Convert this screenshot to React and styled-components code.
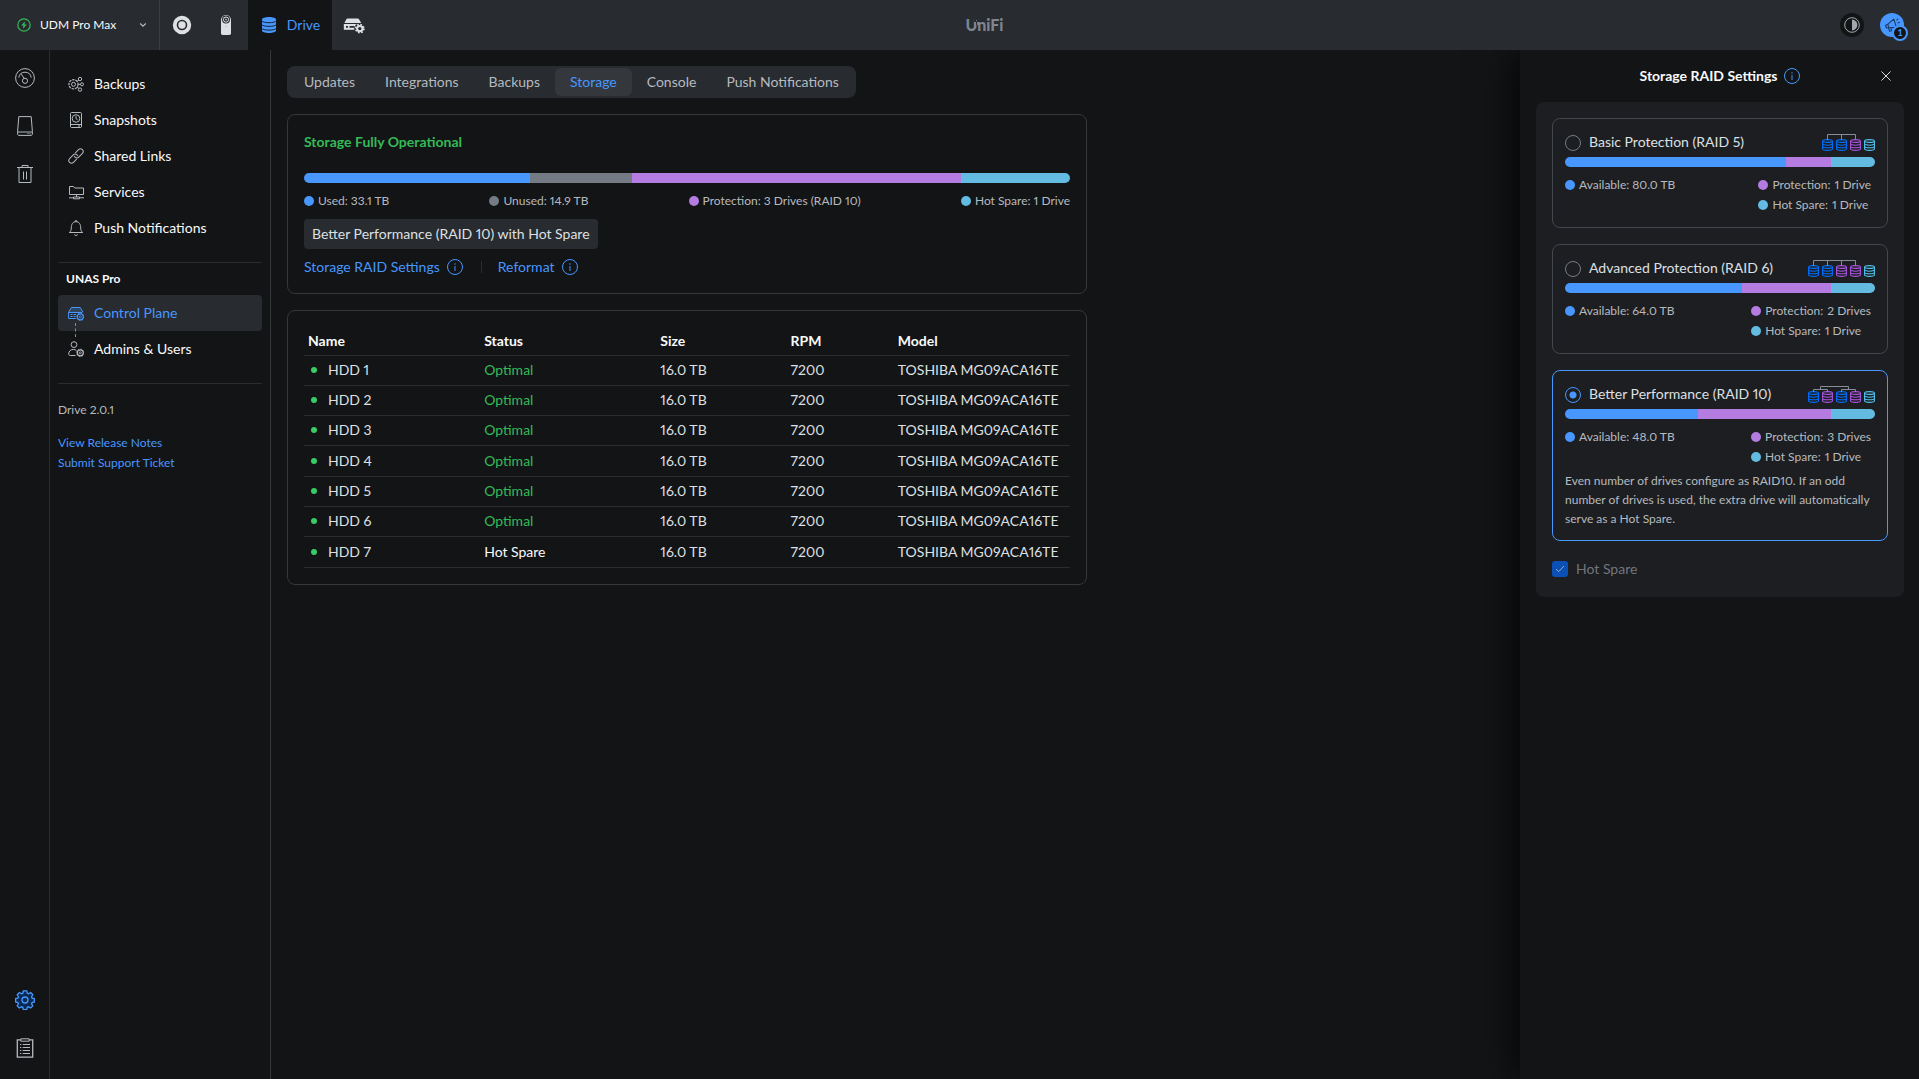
import React, { useState } from "react"
import styled, { createGlobalStyle, css } from "styled-components"

const colors = {
    page: "#131416",
    bar: "#282b2f",
    tabActive: "#34383d",
    panel: "#1d1e21",
    line: "#2a2c30",
    border: "#34373b",
    borderStrong: "#42474d",
    text: "#f9fafa",
    textSoft: "#dee0e3",
    textMuted: "#b6babf",
    textDim: "#70757d",
    blue: "#4797ff",
    green: "#34ba57",
    purple: "#b47be0",
    cyan: "#63bbe1",
    gray: "#747b84"
}

const rails = [
    { name: "Dashboard", icon: "gauge" },
    { name: "Drives", icon: "disk" },
    { name: "Trash", icon: "trash" }
]

const navItems = [
    { name: "Backups", icon: "backups" },
    { name: "Snapshots", icon: "snapshot" },
    { name: "Shared Links", icon: "link" },
    { name: "Services", icon: "services" },
    { name: "Push Notifications", icon: "bell" }
]

const tabs = ["Updates", "Integrations", "Backups", "Storage", "Console", "Push Notifications"]

const usage = [
    { label: "Used: 33.1 TB", size: 226, color: colors.blue },
    { label: "Unused: 14.9 TB", size: 102, color: colors.gray },
    { label: "Protection: 3 Drives (RAID 10)", size: 329, color: colors.purple },
    { label: "Hot Spare: 1 Drive", size: 109, color: colors.cyan }
]

const drives = [1, 2, 3, 4, 5, 6, 7].map((n) => ({
    name: `HDD ${n}`,
    status: n === 7 ? "Hot Spare" : "Optimal",
    size: "16.0 TB",
    rpm: "7200",
    model: "TOSHIBA MG09ACA16TE"
}))

const raids = [
    {
        id: "raid5",
        title: "Basic Protection (RAID 5)",
        sizes: [221, 45, 44],
        available: "80.0 TB",
        protection: "1 Drive",
        disks: "bbpc"
    },
    {
        id: "raid6",
        title: "Advanced Protection (RAID 6)",
        sizes: [177, 89, 44],
        available: "64.0 TB",
        protection: "2 Drives",
        disks: "bbppc"
    },
    {
        id: "raid10",
        title: "Better Performance (RAID 10)",
        sizes: [133, 133, 44],
        available: "48.0 TB",
        protection: "3 Drives",
        disks: "bpbpc",
        note: "Even number of drives configure as RAID10. If an odd number of drives is used, the extra drive will automatically serve as a Hot Spare."
    }
]

const App = () => {
    const [tab, setTab] = useState("Storage")
    const [raid, setRaid] = useState("raid10")

    return (
        <Page>
            <GlobalStyle />
            <TopBar />
            <Body>
                <Rail>
                    {rails.map(({ name, icon }) => (
                        <RailLink key={name} href="#" aria-label={name}><Icon name={icon} size={20} /></RailLink>
                    ))}
                    <Spacer />
                    <RailLink href="#" aria-label="Settings" $active><Icon name="gear" size={20} /></RailLink>
                    <RailLink href="#" aria-label="Logs"><Icon name="clipboard" size={20} /></RailLink>
                </Rail>
                <Sidebar />
                <Main>
                    <Tabs>
                        {tabs.map((name) => (
                            <Tab key={name} type="button" $active={name === tab} onClick={() => setTab(name)}>{name}</Tab>
                        ))}
                    </Tabs>
                    <Summary />
                    <DriveTable />
                </Main>
                <Panel>
                    <PanelHeader>
                        <PanelTitle>Storage RAID Settings</PanelTitle>
                        <InfoButton />
                        <CloseButton type="button" aria-label="Close">
                            <svg width="10" height="10" viewBox="0 0 10 10" fill="none" stroke="currentColor" strokeWidth="1"><path d="M.5.5l9 9M9.5.5l-9 9" /></svg>
                        </CloseButton>
                    </PanelHeader>
                    <PanelBody>
                        {raids.map((item) => (
                            <RaidOption key={item.id} {...item} checked={item.id === raid} onSelect={() => setRaid(item.id)} />
                        ))}
                        <CheckLabel>
                            <Checkbox type="checkbox" checked disabled readOnly />
                            <CheckMark width="10" height="8" viewBox="0 0 10 8"><path d="M1 4l2.7 2.7L9 1" /></CheckMark>
                            Hot Spare
                        </CheckLabel>
                    </PanelBody>
                </Panel>
            </Body>
        </Page>
    )
}

const TopBar = () => (
    <Header>
        <ConsoleLabel>
            <Icon name="power" size={14} />
            <ConsoleSelect aria-label="Console">
                <option>UDM Pro Max</option>
            </ConsoleSelect>
            <svg width="8" height="6" viewBox="0 0 8 6" fill="none" stroke="#b6babf" strokeWidth="1.2"><path d="M1.2 1.5L4 4.2l2.8-2.7" /></svg>
        </ConsoleLabel>
        <AppLink href="#" aria-label="Network"><Icon name="network" size={20} /></AppLink>
        <AppLink href="#" aria-label="Protect"><Icon name="doorbell" size={22} /></AppLink>
        <AppLink href="#" $active><Icon name="stack" size={18} />Drive</AppLink>
        <AppLink href="#" aria-label="Control Plane"><Icon name="serverCog" size={22} /></AppLink>
        <Brand>
            UniFi
            <BrandPixels width="5" height="6" viewBox="0 0 5 6">
                <rect width="5" height="6" fill={colors.bar} />
                <path d="M0 3h2v3H0zM2 1h1v1H2zM3 3h2v3H3z" fill="currentColor" />
            </BrandPixels>
        </Brand>
        <Tools>
            <ThemeButton type="button" aria-label="Theme">
                <svg width="16" height="16" viewBox="0 0 16 16"><circle cx="8" cy="8" r="7.3" fill="none" stroke="currentColor" /><path d="M8 2.6a5.4 5.4 0 0 1 0 10.8z" fill="currentColor" /></svg>
            </ThemeButton>
            <Avatar type="button" aria-label="Account">
                <Icon name="megaphone" size={18} />
                <Badge>1</Badge>
            </Avatar>
        </Tools>
    </Header>
)

const Sidebar = () => (
    <SidebarBox>
        <nav>
            {navItems.map(({ name, icon }) => (
                <NavLink key={name} href="#"><Icon name={icon} size={16} />{name}</NavLink>
            ))}
        </nav>
        <NavGroup>
            <h2>UNAS Pro</h2>
            <NavLink href="#" $active>
                <Icon name="controlPlane" size={16} />
                Control Plane
                <Connector width="1" height="14" viewBox="0 0 1 14"><path d="M.5 0v14" stroke={colors.blue} strokeDasharray="3 2.5" /></Connector>
            </NavLink>
            <NavLink href="#"><Icon name="admins" size={16} />Admins &amp; Users</NavLink>
        </NavGroup>
        <Version>
            <p>Drive 2.0.1</p>
            <a href="#">View Release Notes</a>
            <a href="#">Submit Support Ticket</a>
        </Version>
    </SidebarBox>
)

const Summary = () => (
    <Card>
        <SummaryTitle>Storage Fully Operational</SummaryTitle>
        <UsageBar items={usage} />
        <LegendRow>
            {usage.map(({ label, color }) => <LegendItem key={label} $color={color}>{label}</LegendItem>)}
        </LegendRow>
        <Chip>Better Performance (RAID 10) with Hot Spare</Chip>
        <Links>
            <span><a href="#">Storage RAID Settings</a><InfoButton /></span>
            <span><a href="#">Reformat</a><InfoButton /></span>
        </Links>
    </Card>
)

const DriveTable = () => (
    <Card>
        <Table>
            <thead>
                <tr>
                    <th>Name</th>
                    <th>Status</th>
                    <th>Size</th>
                    <th>RPM</th>
                    <th>Model</th>
                </tr>
            </thead>
            <tbody>
                {drives.map((drive) => (
                    <tr key={drive.name}>
                        <td><Dot />{drive.name}</td>
                        <StatusCell $ok={drive.status === "Optimal"}>{drive.status}</StatusCell>
                        <td>{drive.size}</td>
                        <td>{drive.rpm}</td>
                        <td>{drive.model}</td>
                    </tr>
                ))}
            </tbody>
        </Table>
    </Card>
)

const RaidOption = ({ id, title, sizes, available, protection, disks, note, checked, onSelect }) => (
    <RaidCard $active={checked}>
        <RaidHead>
            <Radio type="radio" name="raid" id={id} checked={checked} onChange={onSelect} />
            <label htmlFor={id}>{title}</label>
            <DiskTree disks={disks} />
        </RaidHead>
        <UsageBar items={[colors.blue, colors.purple, colors.cyan].map((color, i) => ({ color, size: sizes[i] }))} />
        <RaidLegend>
            <LegendItem $color={colors.blue}>Available: {available}</LegendItem>
            <div>
                <LegendItem $color={colors.purple}>Protection: <span>{protection}</span></LegendItem>
                <LegendItem $color={colors.cyan}>Hot Spare: <span>1 Drive</span></LegendItem>
            </div>
        </RaidLegend>
        {note && <Note>{note}</Note>}
    </RaidCard>
)

const UsageBar = ({ items }) => (
    <Bar>
        {items.map(({ color, size }) => <Segment key={color} $color={color} style={{ flexGrow: size }} />)}
    </Bar>
)

const diskColors = { b: "#006fff", p: "#a855e0", c: "#4fc3f0" }

const DiskTree = ({ disks }) => {
    const width = disks.length * 14 - 3
    const last = width - 19.5
    const wires = disks === "bpbpc"
        ? "M5.5 6V3.5h14V6M33.5 6V3.5h14V6M12.5 3.5v-3h28v3"
        : `M5.5 6V.5H${last}V6` + [19.5, 33.5].filter((x) => x < last).map((x) => `M${x} .5V6`).join("")
    return (
        <svg width={width} height="18" viewBox={`0 0 ${width} 18`} fill="none">
            {disks.split("").map((disk, i) => (
                <g key={i} transform={`translate(${i * 14} 5)`} stroke={diskColors[disk]} strokeWidth="1.1">
                    <ellipse cx="5.5" cy="2" rx="4.9" ry="1.5" fill={diskColors[disk]} fillOpacity=".25" />
                    <path d="M.6 2v7.8c0 .9 2.2 1.6 4.9 1.6s4.9-.7 4.9-1.6V2M.6 4.6c0 .9 2.2 1.6 4.9 1.6s4.9-.7 4.9-1.6M.6 7.2c0 .9 2.2 1.6 4.9 1.6s4.9-.7 4.9-1.6" />
                </g>
            ))}
            <path d={wires} stroke="#868d96" />
        </svg>
    )
}

const InfoButton = () => (
    <IconButton type="button" aria-label="More info">
        <svg width="16" height="16" viewBox="0 0 16 16" fill="none" stroke="currentColor">
            <circle cx="8" cy="8" r="7.5" />
            <path d="M8 7v5M8 4.3v1.4" strokeWidth="1.3" opacity=".75" />
        </svg>
    </IconButton>
)

const smallGear = (
    <>
        <circle cx="12.3" cy="11.8" r="3" strokeWidth="1.2" />
        <circle cx="12.3" cy="11.8" r="1" strokeWidth=".8" />
        <circle cx="12.3" cy="11.8" r="3.7" strokeWidth=".8" strokeDasharray="1.4 1.5" />
    </>
)

// [viewBox size, drawing]
const icons = {
    power: [14, (
        <g fill="none" stroke={colors.green}>
            <circle cx="7" cy="7" r="6.2" strokeWidth="1.2" />
            <path d="M7.9 3.2L4.2 7.6h2.2l-.4 3.2 3.8-4.4H7.5z" fill={colors.green} stroke="none" />
        </g>
    )],
    network: [20, (
        <g fill="#dee0e3">
            <path fillRule="evenodd" d="M10 .8a9.2 9.2 0 1 0 0 18.4A9.2 9.2 0 0 0 10 .8zm0 3.9a5.3 5.3 0 1 1 0 10.6 5.3 5.3 0 0 1 0-10.6z" />
            <circle cx="10" cy="10" r="3.7" />
        </g>
    )],
    doorbell: [22, (
        <g>
            <path d="M6 6a5 5 0 0 1 10 0v13.300c0 .9-.7 1.700-1.700 1.700H7.700c-1 0-1.700-.8-1.700-1.700z" fill="#dee0e3" />
            <circle cx="11" cy="5.6" r="4" fill={colors.bar} />
            <circle cx="11" cy="5.6" r="2.6" fill="none" stroke="#dee0e3" />
            <circle cx="11" cy="5.6" r=".8" fill="#dee0e3" />
            <circle cx="11" cy="12.5" r=".6" fill="#9da2a9" />
        </g>
    )],
    stack: [18, (
        <g>
            <path d="M2 3.500C2 2 5.100 1 9 1s7 1 7 2.500v11C16 16 12.900 17 9 17s-7-1-7-2.500z" fill="currentColor" />
            <path d="M1.500 4.800c1 1.300 4 1.900 7.500 1.900s6.500-.6 7.500-1.900M1.500 8.500c1 1.300 4 1.900 7.500 1.900s6.500-.6 7.500-1.900M1.500 12.200c1 1.300 4 1.900 7.500 1.900s6.500-.6 7.500-1.900" fill="none" stroke={colors.page} strokeWidth=".9" />
        </g>
    )],
    serverCog: [22, (
        <g>
            <path d="M4.600 4.500h9.800c.8 0 1.400.3 1.800 1l2 3.500H1.400l1.800-3.600c.3-.6.800-.9 1.400-.9z" fill="#dee0e3" />
            <path d="M.8 10h18.500v5.800H.8z" fill="#dee0e3" />
            <path d="M3 12h2v1.800H3zM6.500 12h5v1.800h-5z" fill={colors.bar} />
            <circle cx="16.800" cy="14.600" r="5.600" fill={colors.bar} />
            <circle cx="16.800" cy="14.600" r="2.700" fill="none" stroke="#dee0e3" strokeWidth="2" />
            <circle cx="16.800" cy="14.600" r="4.100" fill="none" stroke="#dee0e3" strokeWidth="1.600" strokeDasharray="1.700 1.520" />
        </g>
    )],
    megaphone: [18, (
        <g fill="none" stroke="#1b3a66" strokeWidth="1.100" strokeLinejoin="round">
            <path d="M2.500 9.500l2.300-1.300 6-5 2.700 8.200-8 .300-2 .300z" />
            <path d="M5.500 12l1.200 3.300 2-.6-.8-2.900M4.800 8.200l1 3.400" />
            <path d="M13.500 4.500l1.700-2M14.500 7l2.300-.7M14.800 9.300l2 .4" />
        </g>
    )],
    gauge: [20, (
        <g>
            <circle cx="10" cy="10" r="9.400" />
            <path d="M3.800 9.600A6.400 6.400 0 0 1 10 4.200a6.400 6.400 0 0 1 6.200 5.400" />
            <circle cx="10" cy="12.800" r="2.600" />
            <path d="M9.200 10.300L6.400 6.300" />
        </g>
    )],
    disk: [20, (
        <g>
            <path d="M3.800.6h12.400l1.200 14.900v2.400c0 .9-.6 1.500-1.400 1.500H4c-.8 0-1.400-.6-1.400-1.500v-2.400zM2.600 16h14.800" />
            <path d="M12.500 17.700h1M14.500 17.700h1" />
        </g>
    )],
    trash: [20, <path d="M2 3.500h16M7 3.500v-2h6v2M4 3.500v15h12v-15M8.500 7.500v8M11.500 7.500v8" />],
    gear: [20, (
        <g strokeWidth="1.300">
            <path fill="#0a2a56" d="M8.300.8h3.400l.6 2.400 1.200.5 2.200-1.200 2.100 2.200-1.200 2.100.5 1.300 2.300.5v3.300l-2.300.6-.5 1.200 1.200 2.200-2.200 2.100-2.100-1.200-1.200.5-.6 2.300H8.300l-.5-2.300-1.300-.5-2.100 1.200-2.200-2.100 1.200-2.200-.5-1.200-2.300-.6V8.600l2.300-.5.5-1.300-1.200-2.100 2.200-2.200 2.100 1.200 1.300-.5z" />
            <circle cx="10" cy="10" r="3" />
        </g>
    )],
    clipboard: [20, (
        <g>
            <path d="M6 1.800H2.300v17.400h15.400V1.800H14" strokeWidth="1.300" />
            <path d="M5.800.8h8.400v2.400H5.800z" />
            <path d="M5 6.500h1.300M7.700 6.500H15M5 9.500h1.300M7.700 9.500H15M5 12.500h1.300M7.700 12.500H15M5 15.500h1.300M7.700 15.500H15" />
        </g>
    )],
    backups: [16, (
        <g>
            <circle cx="5.500" cy="8.300" r="4.600" strokeWidth="1.200" strokeDasharray="2.400 .9" />
            <circle cx="5.500" cy="8.300" r="2" />
            <circle cx="12" cy="3" r="1.700" />
            <circle cx="14" cy="8.300" r="1.500" />
            <circle cx="12" cy="13.600" r="1.700" />
            <path d="M9 5.500l1.900-1.400M10.200 8.300h2.300M9 11l1.900 1.500" />
        </g>
    )],
    snapshot: [16, (
        <g>
            <rect x="2.500" y=".5" width="11" height="15" rx="1" />
            <path d="M2.500 12.500h11M10 14h2" />
            <circle cx="8" cy="6.500" r="3.800" />
            <path d="M8 4.200v2.500l1.500 1" />
        </g>
    )],
    link: [16, (
        <g transform="rotate(-45 8 8)">
            <path d="M6.500 10.700H1.700a2.700 2.700 0 0 1 0-5.400h5.100a2.700 2.700 0 0 1 2.400 4" />
            <path d="M9.500 5.300h4.800a2.700 2.700 0 0 1 0 5.400H9.200a2.700 2.700 0 0 1-2.400-4" />
        </g>
    )],
    services: [16, (
        <g>
            <path d="M1.500 10.500v-8h4l1.300 1.500h8.700v6.500zM8.500 10.500v2.500" />
            <path d="M1 13.800h4.500M11.500 13.800H16M5.500 13h6v1.800h-6z" />
        </g>
    )],
    bell: [16, (
        <g>
            <path d="M1.300 12.500c1.500-1 2-2.300 2-4.500C3.300 4 5 1.700 8 1.700S12.700 4 12.700 8c0 2.200.5 3.500 2 4.500zM7 1.500c0-.6.4-1 1-1s1 .4 1 1M6.300 14.700c.8.900 2.600.9 3.400 0" />
        </g>
    )],
    controlPlane: [16, (
        <g>
            <path d="M.6 13.500V7.300L3.300 2.500h8.900l2.900 4.800M.6 13.500h7.200" />
            <path d="M.8 7.500h13.500l-2.300-4.600H3.300z" fill="currentColor" opacity=".25" />
            <path d="M.6 7.500h13.500M2.500 9.500h2M2.500 11.500h2M5.500 9.500h2.500M5.500 11.500h2" />
            {smallGear}
        </g>
    )],
    admins: [16, (
        <g>
            <circle cx="6" cy="3.600" r="2.900" />
            <path d="M7.500 14.500H2.300C1.200 14.500.7 13.800.7 13c0-2.700 2-4.600 4.600-4.600 1.200 0 2.300.4 3.100 1.100" />
            {smallGear}
        </g>
    )]
}

const outlined = ["gauge", "disk", "trash", "gear", "clipboard", "backups", "snapshot", "link", "services", "bell", "controlPlane", "admins"]

const Icon = ({ name, size }) => {
    const [box, drawing] = icons[name]
    return (
        <svg width={size} height={size} viewBox={`0 0 ${box} ${box}`} fill="none" stroke={outlined.includes(name) ? "currentColor" : "none"} aria-hidden="true">
            {drawing}
        </svg>
    )
}

const GlobalStyle = createGlobalStyle`
    * {
        box-sizing: border-box;
    }
    body {
        margin: 0;
        background: ${colors.page};
        color: ${colors.textSoft};
        font: normal 14px/20px Lato, "Open Sans", sans-serif;
        font-variant-numeric: proportional-nums;
    }
    h1, h2, p {
        margin: 0;
    }
    a {
        color: ${colors.blue};
        text-decoration: none;
    }
    button, select {
        font: inherit;
        color: inherit;
        background: none;
        border: none;
        padding: 0;
        cursor: pointer;
    }
    svg {
        display: block;
        flex: none;
    }
`

const Page = styled.div`
    display: flex;
    flex-direction: column;
    min-height: 100vh;
`

const Header = styled.header`
    display: flex;
    align-items: stretch;
    height: 50px;
    background: ${colors.bar};
    position: relative;
`

const ConsoleLabel = styled.label`
    display: flex;
    align-items: center;
    width: 160px;
    padding: 0 12px 0 17px;
    border-right: 1px solid #3a3e43;
`

const ConsoleSelect = styled.select`
    appearance: none;
    flex: 1;
    margin-left: 9px;
    font-size: 12px;
    color: ${colors.text};
    outline: none;
`

const AppLink = styled.a`
    display: flex;
    align-items: center;
    justify-content: center;
    gap: 9px;
    width: 44px;
    ${({ $active }) => $active && css`
        width: 84px;
        background: ${colors.page};
    `}
`

/* centred over the area right of the icon rail */
const Brand = styled.div`
    position: absolute;
    left: calc(50% + 25px);
    top: 50%;
    transform: translate(-50%, -50%);
    color: #7d8591;
    font-size: 16px;
    font-weight: 900;
`

const BrandPixels = styled.svg`
    position: absolute;
    left: 8px;
    top: 4px;
`

const Tools = styled.div`
    display: flex;
    align-items: center;
    gap: 16px;
    margin-left: auto;
    padding-right: 15px;
`

const ThemeButton = styled.button`
    display: grid;
    place-items: center;
    width: 24px;
    height: 24px;
    border-radius: 50%;
    background: ${colors.page};
    color: #a3a8af;
`

const Avatar = styled.button`
    position: relative;
    display: grid;
    place-items: center;
    width: 24px;
    height: 24px;
    border-radius: 50%;
    background: ${colors.blue};
`

const Badge = styled.span`
    position: absolute;
    right: -4px;
    bottom: -4px;
    width: 16px;
    height: 16px;
    border: 2px solid ${colors.blue};
    border-radius: 50%;
    background: ${colors.page};
    color: ${colors.blue};
    font: bold 9px/12px Lato, sans-serif;
    text-align: center;
`

const Body = styled.div`
    display: flex;
    flex: 1;
`

const Rail = styled.nav`
    display: flex;
    flex-direction: column;
    width: 50px;
    padding: 4px 0 7px;
    border-right: 1px solid ${colors.line};
`

const RailLink = styled.a`
    display: grid;
    place-items: center;
    height: 48px;
    color: ${({ $active }) => $active ? colors.blue : colors.textMuted};
`

const Spacer = styled.div`
    flex: 1;
`

const SidebarBox = styled.aside`
    width: 221px;
    padding: 16px 8px;
    border-right: 1px solid ${colors.border};
`

const NavLink = styled.a`
    position: relative;
    display: flex;
    align-items: center;
    gap: 10px;
    height: 36px;
    padding-left: 10px;
    border-radius: 4px;
    color: ${colors.text};
    > svg {
        color: ${colors.textMuted};
    }
    ${({ $active }) => $active && css`
        background: ${colors.bar};
        color: ${colors.blue};
        > svg {
            color: ${colors.blue};
        }
    `}
`

const Connector = styled.svg`
    position: absolute;
    left: 17px;
    top: 28px;
    z-index: 1;
`

const NavGroup = styled.nav`
    margin: 16px 0;
    padding-bottom: 16px;
    border-top: 1px solid ${colors.line};
    border-bottom: 1px solid ${colors.line};
    h2 {
        padding: 6px 8px;
        font: bold 12px/20px Lato, sans-serif;
        color: ${colors.text};
    }
`

const Version = styled.div`
    display: flex;
    flex-direction: column;
    font-size: 12px;
    color: ${colors.textMuted};
    p {
        margin-bottom: 13px;
    }
`

const Main = styled.main`
    display: flex;
    flex-direction: column;
    align-items: flex-start;
    gap: 16px;
    flex: 1;
    min-width: 0;
    padding: 16px;
`

const Tabs = styled.div`
    display: flex;
    padding: 2px;
    border-radius: 8px;
    background: ${colors.bar};
`

const Tab = styled.button`
    height: 28px;
    padding: 0 15px;
    border-radius: 6px;
    color: ${({ $active }) => $active ? colors.blue : colors.textMuted};
    background: ${({ $active }) => $active ? colors.tabActive : "none"};
`

const Card = styled.section`
    width: 100%;
    max-width: 800px;
    padding: 16px;
    border: 1px solid ${colors.border};
    border-radius: 8px;
`

const SummaryTitle = styled.h1`
    margin: 1px 0 21px;
    font-size: 14px;
    line-height: 20px;
    color: ${colors.green};
`

const Bar = styled.div`
    display: flex;
    height: 10px;
    border-radius: 5px;
    overflow: hidden;
`

const Segment = styled.div`
    flex: 1 1 0;
    background: ${({ $color }) => $color};
`

const LegendRow = styled.div`
    display: flex;
    justify-content: space-between;
    margin: 8px 0;
`

const LegendItem = styled.div`
    display: flex;
    align-items: center;
    gap: 4px;
    font-size: 12px;
    line-height: 20px;
    color: ${colors.textMuted};
    &::before {
        content: "";
        width: 10px;
        height: 10px;
        border-radius: 50%;
        background: ${({ $color }) => $color};
    }
`

const Chip = styled.div`
    display: inline-block;
    padding: 5px 8px;
    border-radius: 4px;
    background: ${colors.bar};
`

const Links = styled.div`
    display: flex;
    margin: 8px 0 0;
    span {
        display: flex;
        align-items: center;
        gap: 7px;
    }
    span + span {
        margin-left: 18px;
        padding-left: 17px;
        background: linear-gradient(${colors.line}, ${colors.line}) left center / 1px 12px no-repeat;
    }
`

const IconButton = styled.button`
    color: ${colors.blue};
`

const Table = styled.table`
    width: 100%;
    border-collapse: collapse;
    table-layout: fixed;
    th, td {
        padding: 0 0 0 4px;
        text-align: left;
        border-bottom: 1px solid ${colors.line};
    }
    th {
        height: 28px;
        color: ${colors.text};
    }
    th:nth-child(1), th:nth-child(2) {
        width: 23%;
    }
    th:nth-child(3) {
        width: 17%;
    }
    th:nth-child(4) {
        width: 14%;
    }
    tbody tr {
        height: 30px;
    }
    tbody tr:nth-child(3n + 4) {
        height: 31px;
    }
`

const StatusCell = styled.td`
    color: ${({ $ok }) => $ok ? colors.green : colors.text};
`

const Dot = styled.i`
    display: inline-block;
    width: 6px;
    height: 6px;
    margin: 0 11px 2px 3px;
    border-radius: 50%;
    background: #38cc65;
`

const Panel = styled.aside`
    width: 399px;
    padding: 0 15px 16px 16px;
    background: ${colors.page};
    box-shadow: 0 0 40px #000000;
    clip-path: inset(0 0 0 -60px);
`

const PanelHeader = styled.div`
    position: relative;
    display: flex;
    align-items: center;
    justify-content: center;
    gap: 7px;
    height: 52px;
`

const PanelTitle = styled.h2`
    font-size: 14px;
    line-height: 20px;
    color: ${colors.text};
`

const CloseButton = styled.button`
    position: absolute;
    right: 13px;
    color: ${colors.textSoft};
`

const PanelBody = styled.div`
    display: flex;
    flex-direction: column;
    gap: 16px;
    padding: 16px;
    border-radius: 8px;
    background: ${colors.panel};
`

const RaidCard = styled.div`
    padding: 12px;
    border: 1px solid ${({ $active }) => $active ? colors.blue : colors.borderStrong};
    border-radius: 8px;
`

const RaidHead = styled.div`
    display: flex;
    align-items: center;
    height: 24px;
    margin-bottom: 2px;
    label {
        flex: 1;
        margin-left: 8px;
        padding-bottom: 2px;
    }
`

const Radio = styled.input`
    appearance: none;
    width: 16px;
    height: 16px;
    margin: 0;
    border: 1px solid #747b84;
    border-radius: 50%;
    &:checked {
        border-color: ${colors.blue};
        background: radial-gradient(circle, ${colors.blue} 3px, transparent 4px);
    }
`

const RaidLegend = styled.div`
    display: flex;
    justify-content: space-between;
    align-items: flex-start;
    margin-top: 8px;
    padding-right: 4px;
`

const Note = styled.p`
    margin-top: 4px;
    font-size: 12px;
    line-height: 19px;
    color: ${colors.textMuted};
`

const CheckLabel = styled.label`
    position: relative;
    display: flex;
    align-items: center;
    gap: 8px;
    height: 24px;
    color: ${colors.textDim};
`

const Checkbox = styled.input`
    appearance: none;
    width: 16px;
    height: 16px;
    margin: 0;
    border-radius: 3px;
    background: #0b50b4;
`

const CheckMark = styled.svg`
    position: absolute;
    left: 3px;
    top: 8px;
    fill: none;
    stroke: #9aa9c0;
`

export default App
